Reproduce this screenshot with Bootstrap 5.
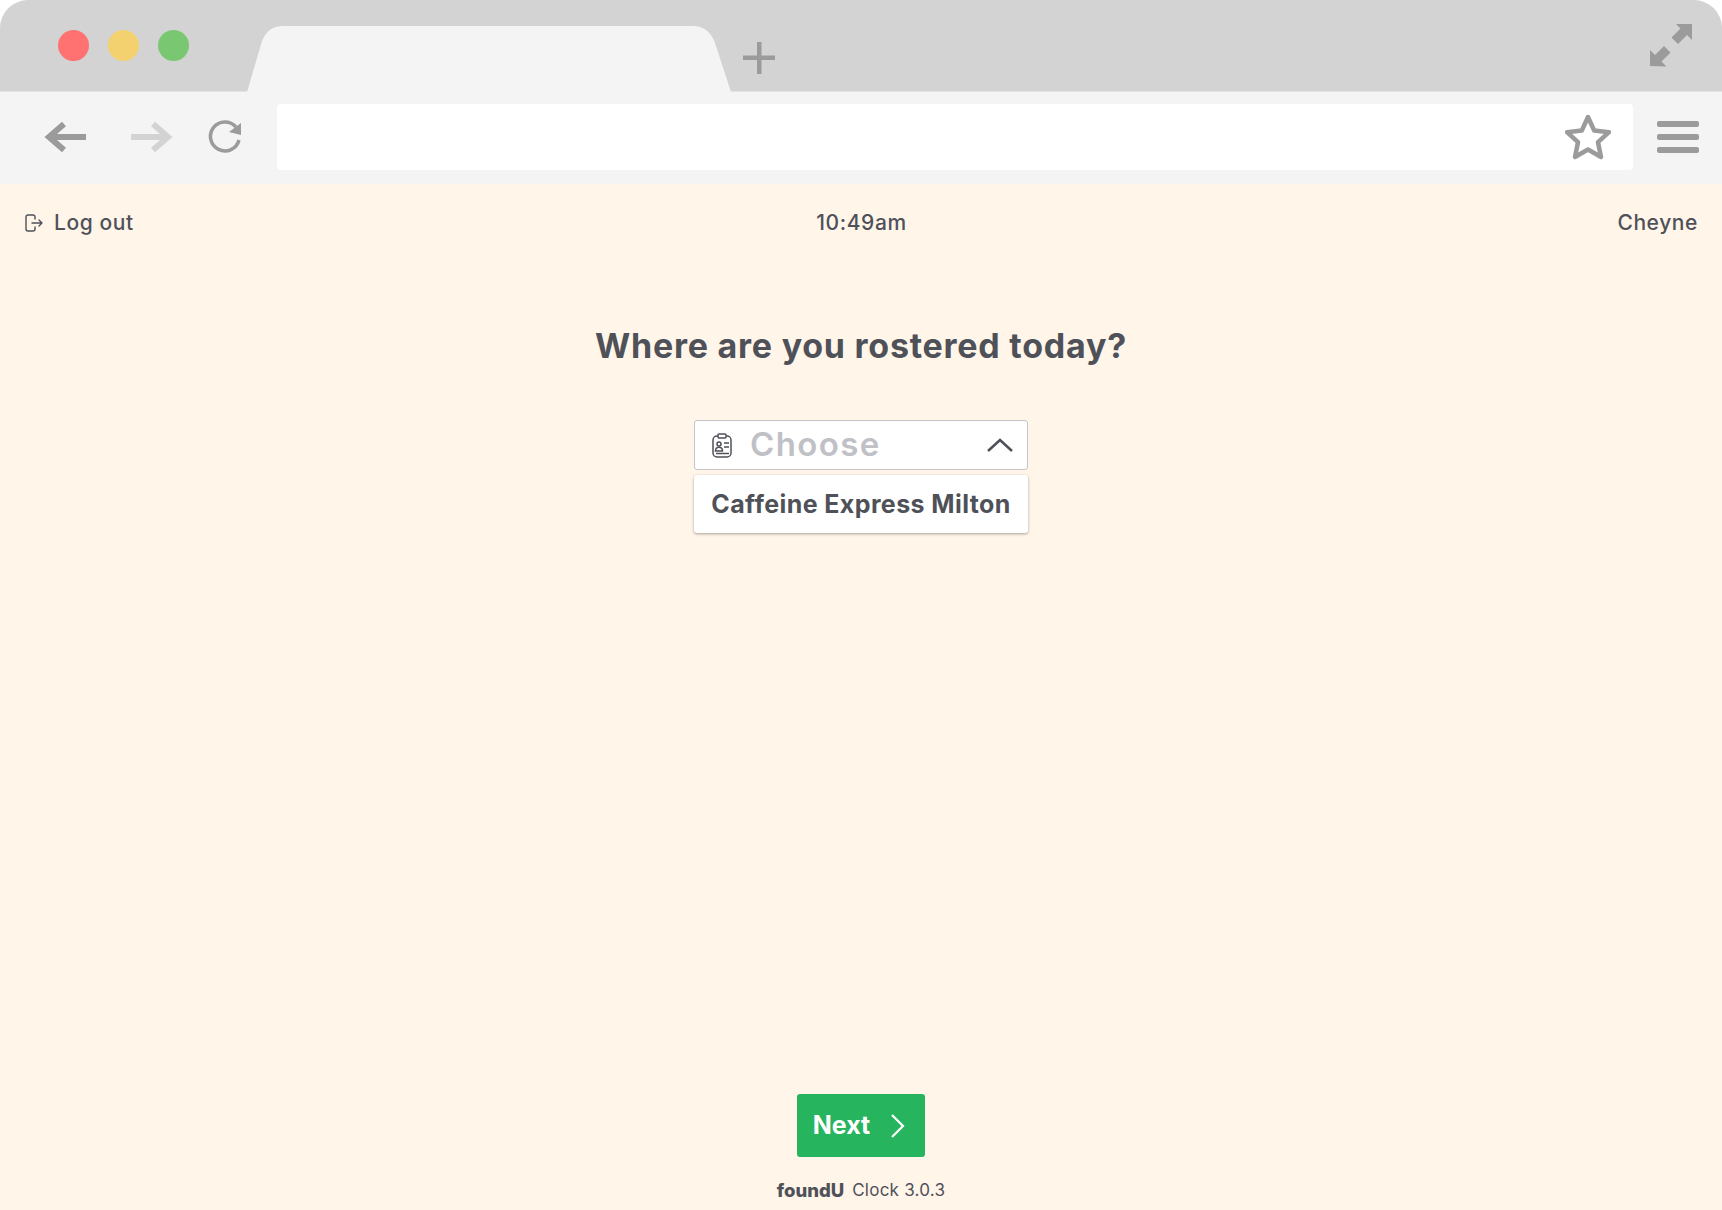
<!DOCTYPE html>
<html lang="en">
<head>
  <meta charset="UTF-8" />
  <meta name="viewport" content="width=device-width, initial-scale=1.0" />
  <title>Clock</title>
  <link href="https://cdn.jsdelivr.net/npm/bootstrap@5.3.0/dist/css/bootstrap.min.css" rel="stylesheet">
  <style>
    html, body { height: 100%; }
    body {
      font-family: Inter, "Liberation Sans", sans-serif;
      background: #fff;
      color: #4f5159;
      overflow: hidden;
    }
    .browser { height: 1210px; }
    .tab-strip {
      height: 92px;
      background: #d3d3d3;
      border-radius: 28px 28px 0 0;
      border-bottom: 1px solid #e4e4e4;
    }
    .lights { gap: 19px; padding: 30px 0 0 58px; width: 247px; }
    .light { width: 31px; height: 31px; border-radius: 50%; }
    .tab-shape { width: 484px; height: 67px; margin-top: 25px; display: block; }
    .plus-icon { margin: 42px 0 0 12px; }
    .expand-icon { margin: 24px 29px 0 0; }
    .tool-row { height: 92px; background: #f4f4f4; padding-bottom: 2px; }
    .nav-icons { width: 277px; padding-left: 44px; }
    .fwd-icon { margin-left: 45px; }
    .reload-icon { margin-left: 35px; }
    .url-box { width: 1356px; height: 66px; background: #fff; border-radius: 4px; padding-right: 22px; }
    .menu-lines { width: 42px; margin-left: 24px; gap: 7px; }
    .menu-lines span { height: 6px; background: #9b9b9b; border-radius: 2px; }
    .page-area { background: #fff5e9; }
    .top-strip { padding: 27px 24px 0 25px; font-size: 21px; font-weight: 500; letter-spacing: .6px; line-height: 24px; }
    .top-strip > div { flex: 1; }
    .logout-gap { gap: 11px; }
    .heading-q { font-size: 34px; font-weight: 700; line-height: 40px; margin: 91px 0 0; letter-spacing: .75px; }
    .pick-wrap { width: 334px; margin-top: 54px; }
    .pick-box {
      height: 50px; background: #fff; border: 1px solid #c4c4c8; border-radius: 3px;
      padding: 0 14px 0 17px;
    }
    .pick-text { font-size: 33px; font-weight: 600; color: #bfc1c7; margin-left: 18px; letter-spacing: 1.400px; }
    .pick-item {
      height: 58px; margin-top: 5px; padding-top: 1px; background: #fff; border-radius: 3px;
      font-size: 25px; font-weight: 700; box-shadow: 0 1px 3px rgba(0,0,0,.35);
      letter-spacing: .4px;
    }
    .next-btn {
      width: 128px; height: 63px; background: #27b45e; color: #fff; border: 0; border-radius: 3px;
      font-size: 25px; font-weight: 700; gap: 21px;
    }
    .next-btn:hover { background: #27b45e; color: #fff; }
    .next-inner { margin-right: 4px; gap: 21px; }
    .foot-line { margin: 22px 0 9px; font-size: 17px; line-height: 22px; letter-spacing: .25px; gap: 8px; }
    .foot-logo { font-size: 18.500px; font-weight: 800; letter-spacing: 0; }
  </style>
</head>
<body>
  <div class="browser d-flex flex-column">
    <div class="tab-strip d-flex">
      <div class="lights d-flex">
        <div class="light" style="background:#ff7271"></div>
        <div class="light" style="background:#f3d16f"></div>
        <div class="light" style="background:#79c770"></div>
      </div>
      <svg class="tab-shape" viewBox="0 0 484 67">
        <path d="M0 67 L15 16 C19 6 26 1 36 1 H446 C457 1 465 8 468 18 L484 67 Z" fill="#f4f4f4"/>
      </svg>
      <svg class="plus-icon" width="32" height="32" viewBox="0 0 32 32">
        <path d="M14 0h4.500v13.500H32v4.500H18.500v14H14V18H0v-4.500h14z" fill="#9b9b9b"/>
      </svg>
      <div class="flex-grow-1"></div>
      <svg class="expand-icon" width="43" height="43" viewBox="0 0 43 43">
        <path d="M26 0h16v16l-5-5-9 9-6.500-6.500 9-9zM0 42V26l5 5 9-9 6.500 6.500-9 9 5 5z" fill="#9b9b9b"/>
      </svg>
    </div>
    <div class="tool-row d-flex align-items-center">
      <div class="nav-icons d-flex align-items-center">
        <svg width="42" height="30" viewBox="0 0 42 30" fill="none" stroke="#9b9b9b" stroke-width="6">
          <path d="M42 15H5M20 2 5 15l15 13"/>
        </svg>
        <svg class="fwd-icon" width="42" height="30" viewBox="0 0 42 30" fill="none" stroke="#d3d3d3" stroke-width="6">
          <path d="M0 15h37M22 2l15 13-15 13"/>
        </svg>
        <svg class="reload-icon" width="34" height="34" viewBox="0 0 34 34" fill="none">
          <path d="M28 7A14.500 14.500 0 1 0 31 20" stroke="#9b9b9b" stroke-width="3.500"/>
          <path d="M33 3v12l-12-3z" fill="#9b9b9b"/>
        </svg>
      </div>
      <div class="url-box d-flex align-items-center justify-content-end">
        <svg width="46" height="46" viewBox="0 0 46 46">
          <path d="M23 3l6.200 13.500 14.800 1.700-11 10 3 14.800L23 35.500 10 43l3-14.800-11-10 14.800-1.700z" fill="none" stroke="#9b9b9b" stroke-width="4.500" stroke-linejoin="round"/>
        </svg>
      </div>
      <div class="menu-lines d-flex flex-column">
        <span></span><span></span><span></span>
      </div>
    </div>
    <div class="page-area flex-grow-1 d-flex flex-column">
      <div class="top-strip d-flex">
        <div class="d-flex align-items-center logout-gap">
          <svg width="18" height="18" viewBox="0 0 18 18" fill="none" stroke="#4f5159" stroke-width="1.400" stroke-linecap="round" stroke-linejoin="round">
            <path d="M10 5V3a2 2 0 0 0-2-2H3a2 2 0 0 0-2 2v12a2 2 0 0 0 2 2h5a2 2 0 0 0 2-2v-2M7 9h10M14 6l3 3-3 3"/>
          </svg>
          <span>Log out</span>
        </div>
        <div class="text-center">10:49am</div>
        <div class="text-end">Cheyne</div>
      </div>
      <div class="flex-grow-1 d-flex flex-column align-items-center">
        <h1 class="heading-q">Where are you rostered today?</h1>
        <div class="pick-wrap">
          <div class="pick-box d-flex align-items-center">
            <svg width="20" height="25" viewBox="0 0 20 25" fill="none" stroke="#4f5159" stroke-width="1.500">
              <rect x="1" y="3" width="18" height="21" rx="4"/>
              <rect x="6" y="1" width="8" height="4" rx="1" fill="#fff"/>
              <circle cx="7" cy="11" r="2"/>
              <path d="M3.500 18c0-5 7-5 7 0zM12 10h5M12 14h5M4 20.500h13"/>
            </svg>
            <span class="pick-text flex-grow-1">Choose</span>
            <svg width="26" height="14" viewBox="0 0 26 14" fill="none" stroke="#4f5159" stroke-width="2.500">
              <path d="M1 13 13 2l12 11"/>
            </svg>
          </div>
          <div class="pick-item d-flex align-items-center justify-content-center">Caffeine Express Milton</div>
        </div>
      </div>
      <div class="d-flex flex-column align-items-center">
        <button class="btn next-btn d-flex align-items-center justify-content-center p-0" type="button">
          <span class="next-inner d-flex align-items-center">
            Next
            <svg width="14" height="24" viewBox="0 0 14 24" fill="none" stroke="#fff" stroke-width="2.200">
              <path d="M1 1l11 11L1 23"/>
            </svg>
          </span>
        </button>
        <div class="foot-line d-flex align-items-center">
          <span class="foot-logo">foundU</span>
          <span>Clock 3.0.3</span>
        </div>
      </div>
    </div>
  </div>
</body>
</html>
